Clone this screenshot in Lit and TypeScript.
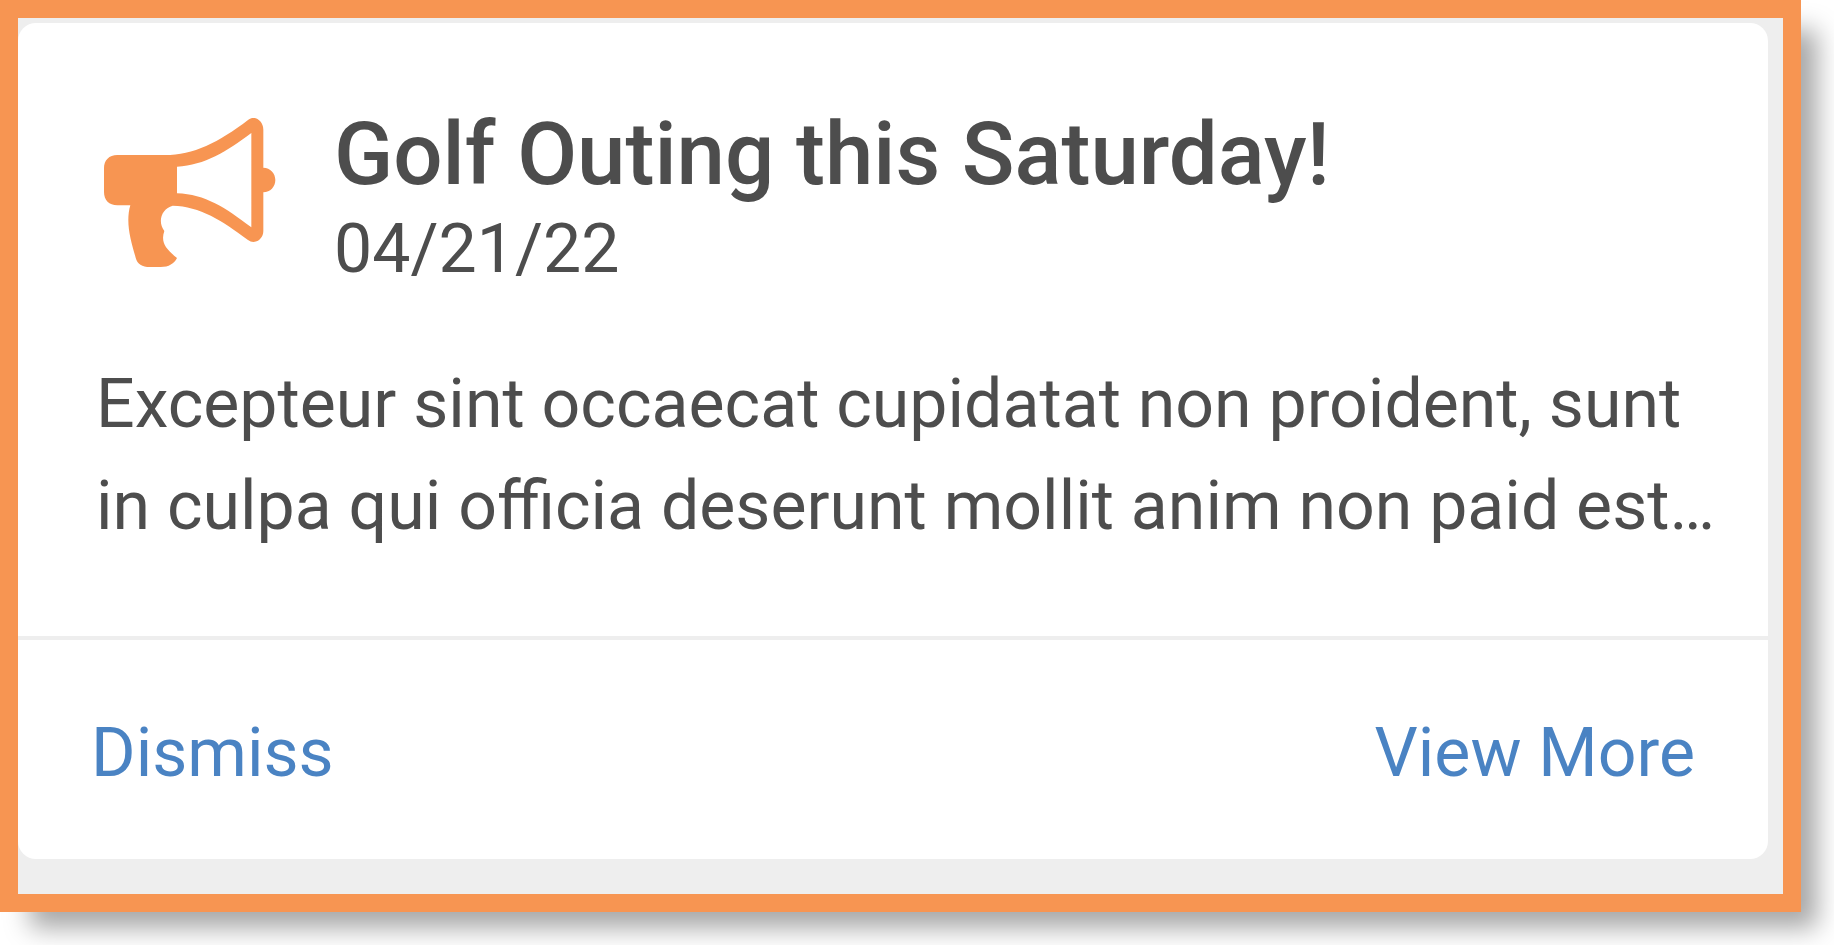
import { LitElement, html, css } from "lit";
import { customElement, property, state } from "lit/decorators.js";

@customElement("megaphone-icon")
export class MegaphoneIcon extends LitElement {
  static styles = css`
    :host {
      display: block;
      flex: none;
    }
    .icon {
      display: block;
      width: 180px;
      height: 186px;
      fill: #f79552;
    }
  `;

  render() {
    return html`
      <svg class="icon" viewBox="18 9 540 558" aria-hidden="true">
        <path
          fill-rule="evenodd"
          d="M82 165H225C310 165 386 127 475 59C494 45 520 62 520 89V203C541 203 556 220 556 240C556 260 541 277 520 277V393C520 419 493 435 474 420C396 361 330 319 248 317C216 325 201 364 223 393C212 425 225 446 261 474C253 491 236 501 212 501H180C156 501 142 492 137 473C122 420 106 367 121 316H82C57 316 42 300 42 276V205C42 181 57 165 82 165ZM261 200V280C346 283 406 323 484 382V99C408 155 346 195 261 200Z"
        />
      </svg>
    `;
  }
}

@customElement("announcement-card")
export class AnnouncementCard extends LitElement {
  @property() heading = "";
  @property() date = "";
  @property() message = "";

  static styles = css`
    :host {
      display: block;
    }
    .card {
      background: #fff;
      border-radius: 18px;
      color: #4d4d4d;
      font-size: 68px;
    }
    .content {
      display: flex;
      flex-direction: column;
      gap: 60px;
      padding: 80px 40px 79px 78px;
    }
    .header {
      display: flex;
      align-items: flex-start;
      gap: 58px;
    }
    .title {
      margin: 0;
      font-size: 87px;
      font-weight: 500;
      line-height: 102px;
    }
    .date {
      display: block;
      line-height: 88px;
    }
    .message {
      margin: 0;
      line-height: 102px;
    }
    .actions {
      display: flex;
      justify-content: space-between;
      padding: 73px 73px 65px;
      border-top: 4px solid #eee;
    }
    .action {
      padding: 0;
      border: 0;
      background: none;
      color: #4a83c3;
      font: inherit;
      line-height: 81px;
      cursor: pointer;
    }
  `;

  render() {
    return html`
      <article class="card">
        <div class="content">
          <header class="header">
            <megaphone-icon></megaphone-icon>
            <div>
              <h1 class="title">${this.heading}</h1>
              <time class="date">${this.date}</time>
            </div>
          </header>
          <p class="message">${this.message}</p>
        </div>
        <footer class="actions">
          <button class="action" type="button">Dismiss</button>
          <button class="action" type="button">View More</button>
        </footer>
      </article>
    `;
  }
}

@customElement("app-root")
export class AppRoot extends LitElement {
  @state() private message =
    "Excepteur sint occaecat cupidatat non proident, sunt in culpa qui officia deserunt mollit anim non paid est…";

  static styles = css`
    :host {
      display: block;
      padding: 0 33px 33px 0;
      background: #fff;
      font-family: Roboto, "Liberation Sans", sans-serif;
    }
    .frame {
      padding: 5px 15px 35px 0;
      border: 18px solid #f79552;
      background: #eee;
      box-shadow: 23px 23px 24px -7px rgba(0, 0, 0, 0.35);
    }
  `;

  render() {
    return html`
      <main class="frame">
        <announcement-card
          heading="Golf Outing this Saturday!"
          date="04/21/22"
          .message=${this.message}
        ></announcement-card>
      </main>
    `;
  }
}
